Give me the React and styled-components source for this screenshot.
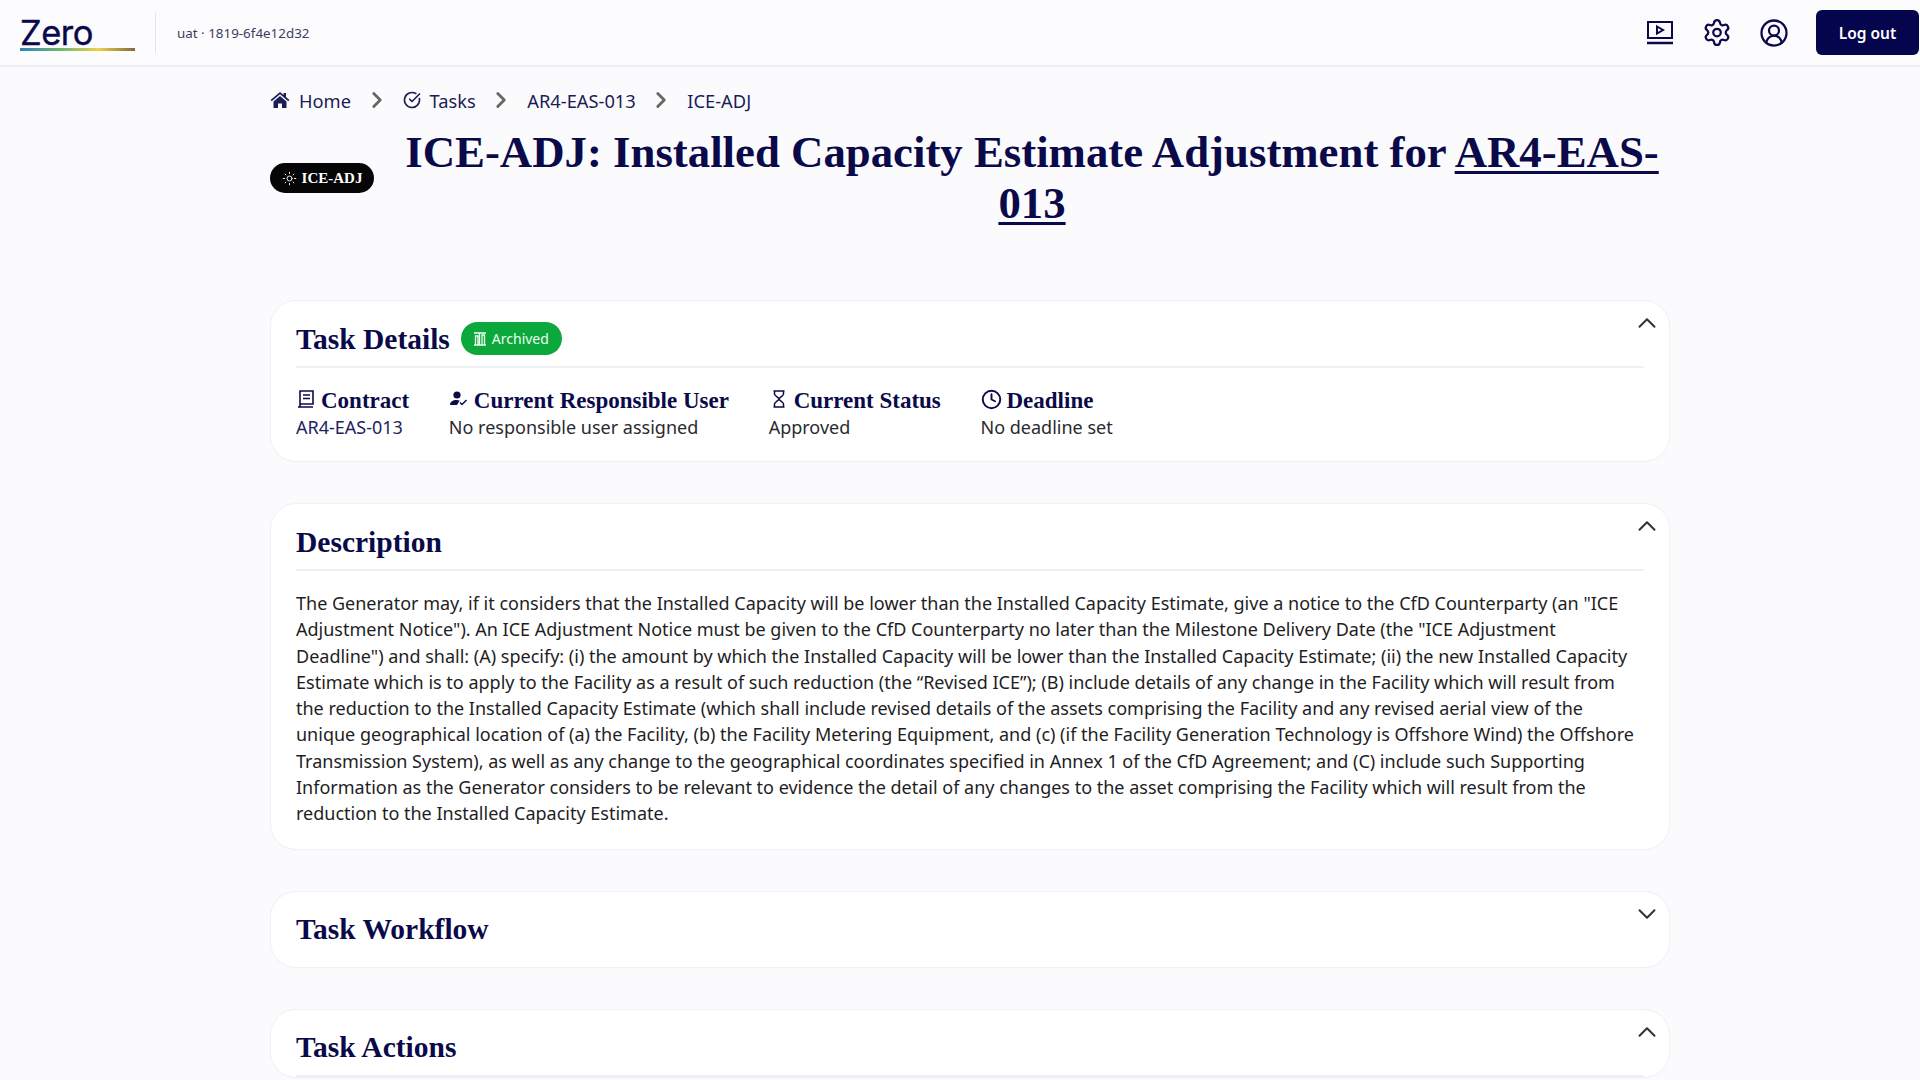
import React from "react";
import styled, { createGlobalStyle } from "styled-components";
import { ChevronRight, ChevronUp, ChevronDown, CircleCheckBig, Settings, CircleUserRound, Clock, Sun } from "lucide-react";

const serif = `"Liberation Serif", "DejaVu Serif", serif`;
const sans = `"Noto Sans", "Open Sans", sans-serif`;
const navy = "#0a0a4a";

const Global = createGlobalStyle`
  html, body { margin: 0; padding: 0; background: #fbfbfd; height: 1080px; overflow: hidden; }
  body { font-family: ${sans}; color: #1f1f2b; }
`;
const Header = styled.header`
  height: 65px; display: flex; align-items: center; background: #fcfcfe;
  border-bottom: 2px solid #f0f0f2; padding: 0 0 0 20px;
`;
const Logo = styled.div`
  width: 115px; display: flex; flex-direction: column; margin-top: 1px;
`;
const LogoWord = styled.span`
  font: 400 34.5px/36px Inter, sans-serif; color: ${navy}; letter-spacing: -0.5px;
  -webkit-text-stroke: 0.4px ${navy};
`;
const LogoLine = styled.span`
  height: 3px; margin-top: -3px; background: linear-gradient(90deg, #2e86b8, #6fb56f 35%, #ecd24a 68%, #7d6a3a);
`;
const Divider = styled.span`
  width: 1px; height: 40px; background: #e4e4e8; margin: 0 21px 0 20px;
`;
const Build = styled.span`
  font-size: 13.4px; color: #3c3c60;
`;
const Actions = styled.div`
  margin-left: auto; display: flex; align-items: center;
`;
const IconBtn = styled.span`
  display: flex; width: 30px; justify-content: center; color: ${navy}; margin-right: 27px;
`;
const Logout = styled.button`
  width: 103px; height: 45px; margin: 0 1px 0 0; border: 0; border-radius: 6px; background: #05054d; color: #fff;
  font: 600 15.5px ${sans};
`;
const Main = styled.main`
  width: 1400px; margin-left: 270px; padding-top: 18px;
`;
const Crumbs = styled.nav`
  height: 30px; display: flex; align-items: center; font-size: 18.3px;
`;
const Crumb = styled.span`
  display: flex; align-items: center; gap: 9px; color: #1c1c56;
`;
const Sep = styled.span`
  display: flex; color: #666; margin: 0 13px 0 12.5px;
`;
const TitleRow = styled.div`
  display: flex; align-items: center; gap: 30px; margin-top: 12px; height: 102px;
`;
const Badge = styled.span`
  flex: none; width: 104px; height: 30px; border-radius: 15px; background: #060606; color: #fff;
  display: flex; align-items: center; justify-content: center; gap: 5px;
  font: 700 15px ${serif};
`;
const Title = styled.h1`
  margin: 0; width: 1256px; text-align: center; color: ${navy};
  font: 700 44.8px/51px ${serif};
  a { color: inherit; white-space: nowrap; text-decoration: underline; text-decoration-thickness: 3px; text-underline-offset: 4px; }
`;
const Stack = styled.div`
  display: flex; flex-direction: column; gap: 41px; margin-top: 71px;
`;
const Card = styled.section`
  position: relative; background: #fff; border: 1px solid #f1f1f4; border-radius: 26px; padding: 0 25px;
  box-shadow: 0 0 2px rgba(0,0,0,.02);
`;
const Toggle = styled.span`
  position: absolute; top: 7px; right: 7px; display: flex; color: #333;
`;
const CardHead = styled.div`
  display: flex; align-items: center; gap: 11px;
  height: ${p => (p.$open ? "55px" : "75px")};
  padding-top: ${p => (p.$open ? "10px" : "0")};
  border-bottom: ${p => (p.$open ? "2px solid #f0f0f3" : "0")};
`;
const CardTitle = styled.h2`
  margin: 0; color: ${navy}; font: 700 29.5px/36px ${serif};
`;
const Status = styled.span`
  display: flex; align-items: center; gap: 5px; height: 33px; padding: 0 13px 0 12px; border-radius: 17px;
  background: #0ca83c; color: #eafff0; font-size: 14px;
`;
const Fields = styled.div`
  display: flex; gap: 39.7px; padding: 19px 0 21px;
`;
const Field = styled.div`
  display: flex; flex-direction: column;
`;
const FieldLabel = styled.div`
  display: flex; align-items: center; gap: 5px; height: 28px; color: ${navy};
  font: 700 23px/28px ${serif};
  svg { margin-top: -4px; }
`;
const FieldValue = styled.div`
  font-size: 18px; line-height: 25px; color: #2a2a2f;
`;
const FieldLink = styled(FieldValue)`
  color: #23235c;
`;
const Body = styled.p`
  margin: 0; padding: 19px 0 22px; font-size: 18px; line-height: 26.3px; color: #1e1e24; white-space: nowrap;
`;

const BookIcon = () => (
  <svg width="20" height="20" viewBox="0 0 20 20" fill="none" stroke="currentColor" strokeWidth="1.6">
    <path d="M4 2h13v13H4zM4 15v3h13M2 18h2M7 6h7M7 9.500h7" />
  </svg>
);
const UserCheckIcon = () => (
  <svg width="20" height="18" viewBox="0 0 20 18" fill="currentColor">
    <circle cx="8" cy="5" r="3.6" />
    <path d="M1 15c0-3.4 3-5 6.5-5 1.2 0 2.3.2 3.2.6L8 15z" />
    <path d="M11 12.5l2 2 4.5-4.5" fill="none" stroke="currentColor" strokeWidth="1.5" />
  </svg>
);
const HourglassIcon = () => (
  <svg width="20" height="20" viewBox="0 0 20 20" fill="none" stroke="currentColor" strokeWidth="1.5">
    <path d="M4.500 2h11M4.500 18h11M5.500 2v3c0 2 4.500 3.500 4.500 5 0 1.500-4.500 3-4.500 5v3M14.500 2v3c0 2-4.500 3.500-4.500 5 0 1.500 4.500 3 4.500 5v3" />
  </svg>
);
const HomeIcon = () => (
  <svg width="20" height="18" viewBox="0 0 20 18" fill="currentColor">
    <path d="M10 1L.6 9l1.1 1.2L10 3.2l8.3 7L19.4 9 16 6.100V2h-2.400v2L10 1z" />
    <path d="M3.500 10.500L10 5l6.500 5.500V17h-4.500v-4.500H8V17H3.500z" />
  </svg>
);
const ScreenIcon = () => (
  <svg width="28" height="26" viewBox="0 0 28 26" fill="none" stroke="currentColor" strokeWidth="2">
    <rect x="2" y="2" width="24" height="16" />
    <path d="M11 6.500l6 3.500-6 3.500z" />
    <path d="M1 23h26" strokeWidth="2.500" />
  </svg>
);
const BarsIcon = () => (
  <svg width="14" height="14" viewBox="0 0 14 14" fill="none" stroke="currentColor" strokeWidth="1.300">
    <path d="M1 1h12M1 13h12M2.500 4h2.500v9H2.500zM6.500 1v12M9 3h2.500v10H9z" />
  </svg>
);

const fields = [
  { icon: <BookIcon />, label: "Contract", value: "AR4-EAS-013", Value: FieldLink },
  { icon: <UserCheckIcon />, label: "Current Responsible User", value: "No responsible user assigned", Value: FieldValue },
  { icon: <HourglassIcon />, label: "Current Status", value: "Approved", Value: FieldValue },
  { icon: <Clock size={21} strokeWidth={2.2} />, label: "Deadline", value: "No deadline set", Value: FieldValue },
];

const lines = [
  'The Generator may, if it considers that the Installed Capacity will be lower than the Installed Capacity Estimate, give a notice to the CfD Counterparty (an "ICE',
  'Adjustment Notice"). An ICE Adjustment Notice must be given to the CfD Counterparty no later than the Milestone Delivery Date (the "ICE Adjustment',
  'Deadline") and shall: (A) specify: (i) the amount by which the Installed Capacity will be lower than the Installed Capacity Estimate; (ii) the new Installed Capacity',
  'Estimate which is to apply to the Facility as a result of such reduction (the “Revised ICE”); (B) include details of any change in the Facility which will result from',
  'the reduction to the Installed Capacity Estimate (which shall include revised details of the assets comprising the Facility and any revised aerial view of the',
  'unique geographical location of (a) the Facility, (b) the Facility Metering Equipment, and (c) (if the Facility Generation Technology is Offshore Wind) the Offshore',
  'Transmission System), as well as any change to the geographical coordinates specified in Annex 1 of the CfD Agreement; and (C) include such Supporting',
  'Information as the Generator considers to be relevant to evidence the detail of any changes to the asset comprising the Facility which will result from the',
  'reduction to the Installed Capacity Estimate.',
];

const Chevron = () => <Sep><ChevronRight size={26} strokeWidth={2.6} /></Sep>;

export default function App() {
  return (
    <>
      <Global />
      <Header>
        <Logo>
          <LogoWord>Zero</LogoWord>
          <LogoLine />
        </Logo>
        <Divider />
        <Build>uat · 1819-6f4e12d32</Build>
        <Actions>
          <IconBtn><ScreenIcon /></IconBtn>
          <IconBtn><Settings size={31} strokeWidth={1.8} /></IconBtn>
          <IconBtn><CircleUserRound size={34} strokeWidth={1.8} /></IconBtn>
          <Logout>Log out</Logout>
        </Actions>
      </Header>
      <Main>
        <Crumbs>
          <Crumb><HomeIcon />Home</Crumb>
          <Chevron />
          <Crumb><CircleCheckBig size={18} strokeWidth={2.2} />Tasks</Crumb>
          <Chevron />
          <Crumb>AR4-EAS-013</Crumb>
          <Chevron />
          <Crumb>ICE-ADJ</Crumb>
        </Crumbs>
        <TitleRow>
          <Badge><Sun size={15} strokeWidth={1.5} />ICE-ADJ</Badge>
          <Title>ICE-ADJ: Installed Capacity Estimate Adjustment for <a href="#t">AR4-EAS-<br />013</a></Title>
        </TitleRow>
        <Stack>
          <Card>
            <Toggle><ChevronUp size={30} strokeWidth={1.6} /></Toggle>
            <CardHead $open>
              <CardTitle>Task Details</CardTitle>
              <Status><BarsIcon />Archived</Status>
            </CardHead>
            <Fields>
              {fields.map(({ icon, label, value, Value }) => (
                <Field key={label}>
                  <FieldLabel>{icon}{label}</FieldLabel>
                  <Value>{value}</Value>
                </Field>
              ))}
            </Fields>
          </Card>
          <Card>
            <Toggle><ChevronUp size={30} strokeWidth={1.6} /></Toggle>
            <CardHead $open><CardTitle>Description</CardTitle></CardHead>
            <Body>{lines.map((l) => <React.Fragment key={l}>{l}<br /></React.Fragment>)}</Body>
          </Card>
          <Card>
            <Toggle><ChevronDown size={30} strokeWidth={1.6} /></Toggle>
            <CardHead><CardTitle>Task Workflow</CardTitle></CardHead>
          </Card>
          <Card>
            <Toggle><ChevronUp size={30} strokeWidth={1.6} /></Toggle>
            <CardHead $open><CardTitle>Task Actions</CardTitle></CardHead>
          </Card>
        </Stack>
      </Main>
    </>
  );
}
